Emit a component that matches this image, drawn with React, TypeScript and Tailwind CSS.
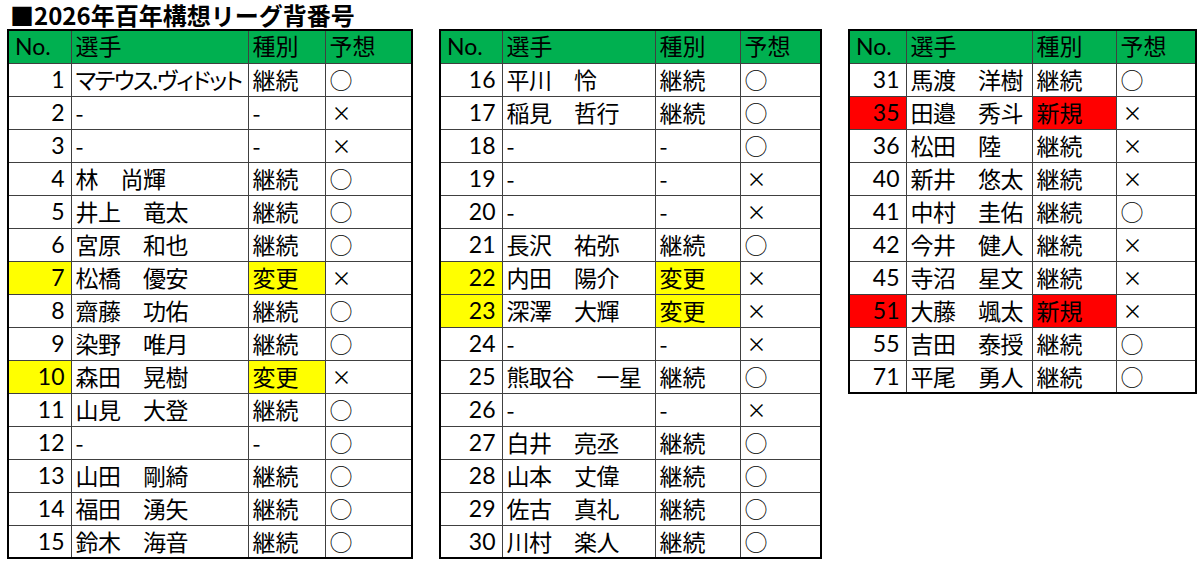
import React from "react";

type Row = [string, string, string, string, ("y" | "r")?];

const t1: Row[] = [
  ["1", "マテウス.ヴィドット", "継続", "○"],
  ["2", "-", "-", "×"],
  ["3", "-", "-", "×"],
  ["4", "林　尚輝", "継続", "○"],
  ["5", "井上　竜太", "継続", "○"],
  ["6", "宮原　和也", "継続", "○"],
  ["7", "松橋　優安", "変更", "×", "y"],
  ["8", "齋藤　功佑", "継続", "○"],
  ["9", "染野　唯月", "継続", "○"],
  ["10", "森田　晃樹", "変更", "×", "y"],
  ["11", "山見　大登", "継続", "○"],
  ["12", "-", "-", "○"],
  ["13", "山田　剛綺", "継続", "○"],
  ["14", "福田　湧矢", "継続", "○"],
  ["15", "鈴木　海音", "継続", "○"],
];

const t2: Row[] = [
  ["16", "平川　怜", "継続", "○"],
  ["17", "稲見　哲行", "継続", "○"],
  ["18", "-", "-", "○"],
  ["19", "-", "-", "×"],
  ["20", "-", "-", "×"],
  ["21", "長沢　祐弥", "継続", "○"],
  ["22", "内田　陽介", "変更", "×", "y"],
  ["23", "深澤　大輝", "変更", "×", "y"],
  ["24", "-", "-", "×"],
  ["25", "熊取谷　一星", "継続", "○"],
  ["26", "-", "-", "×"],
  ["27", "白井　亮丞", "継続", "○"],
  ["28", "山本　丈偉", "継続", "○"],
  ["29", "佐古　真礼", "継続", "○"],
  ["30", "川村　楽人", "継続", "○"],
];

const t3: Row[] = [
  ["31", "馬渡　洋樹", "継続", "○"],
  ["35", "田邉　秀斗", "新規", "×", "r"],
  ["36", "松田　陸", "継続", "×"],
  ["40", "新井　悠太", "継続", "×"],
  ["41", "中村　圭佑", "継続", "○"],
  ["42", "今井　健人", "継続", "×"],
  ["45", "寺沼　星文", "継続", "×"],
  ["51", "大藤　颯太", "新規", "×", "r"],
  ["55", "吉田　泰授", "継続", "○"],
  ["71", "平尾　勇人", "継続", "○"],
];

const cell = "border border-[#404040] px-1 py-0 leading-none whitespace-nowrap overflow-hidden";
const jp = "font-['Noto_Sans_CJK_JP',sans-serif]";

function Sheet({ rows, cols }: { rows: Row[]; cols: number[] }) {
  return (
    <table
      className="table-fixed border-collapse border-2 border-black text-[23px] text-black"
      style={{ width: cols.reduce((a, b) => a + b, 0) }}
    >
      <colgroup>
        {cols.map((w, i) => (
          <col key={i} style={{ width: w }} />
        ))}
      </colgroup>
      <thead>
        <tr className="h-[33px] bg-[#00b050]">
          <th className={`${cell} text-left font-normal pl-1.5`}>No.</th>
          <th className={`${cell} text-left font-normal`}>選手</th>
          <th className={`${cell} text-left font-normal`}>種別</th>
          <th className={`${cell} text-left font-normal`}>予想</th>
        </tr>
      </thead>
      <tbody className="bg-white">
        {rows.map(([no, name, kind, pred, mark]) => {
          const hl = mark === "y" ? "bg-[#ffff00]" : mark === "r" ? "bg-[#ff0000]" : "";
          const long = name.length > 7;
          return (
            <tr key={no} className="h-[33px]">
              <td className={`${cell} text-right pr-1.5 ${hl}`}>{no}</td>
              <td
                className={`${cell} text-left ${jp} tracking-[-0.5px] ${
                  long ? "[font-feature-settings:'palt'] tracking-[-1.6px]" : ""
                }`}
              >
                {name}
              </td>
              <td className={`${cell} text-left ${jp} ${hl}`}>{kind}</td>
              <td
                className={`${cell} text-left ${jp} font-light ${
                  pred === "×" ? "text-[20px] pl-[6px] font-normal" : ""
                }`}
              >
                {pred}
              </td>
            </tr>
          );
        })}
      </tbody>
    </table>
  );
}

export default function App() {
  return (
    <div className="w-[1200px] h-[569px] bg-white font-['Lato','Noto_Sans_CJK_JP',sans-serif] overflow-hidden">
      <div className={`pl-[10px] h-[29px] text-[24px] font-bold leading-[30px] text-black ${jp}`}>
        ■2026年百年構想リーグ背番号
      </div>
      <div className="flex items-start pl-[7px] gap-[26px]">
        <Sheet rows={t1} cols={[63, 177, 77, 87]} />
        <Sheet rows={t2} cols={[62, 153, 85, 81]} />
        <Sheet rows={t3} cols={[57, 126, 84, 80]} />
      </div>
    </div>
  );
}
